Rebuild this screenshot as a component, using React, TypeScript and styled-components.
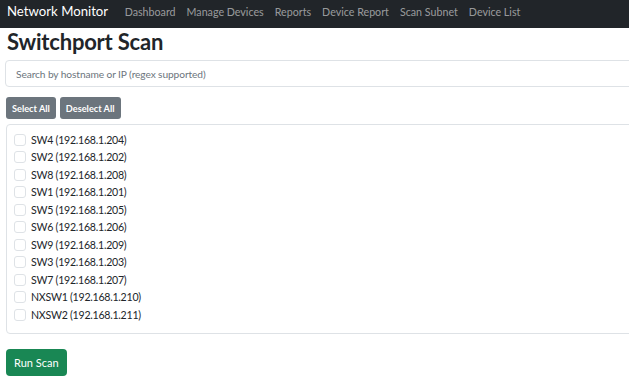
import styled, { createGlobalStyle } from 'styled-components';
import { useState } from 'react';

type Device = {
  name: string;
  ip: string;
};

const devices: Device[] = [
  { name: 'SW4', ip: '192.168.1.204' },
  { name: 'SW2', ip: '192.168.1.202' },
  { name: 'SW8', ip: '192.168.1.208' },
  { name: 'SW1', ip: '192.168.1.201' },
  { name: 'SW5', ip: '192.168.1.205' },
  { name: 'SW6', ip: '192.168.1.206' },
  { name: 'SW9', ip: '192.168.1.209' },
  { name: 'SW3', ip: '192.168.1.203' },
  { name: 'SW7', ip: '192.168.1.207' },
  { name: 'NXSW1', ip: '192.168.1.210' },
  { name: 'NXSW2', ip: '192.168.1.211' },
];

const navLinks = ['Dashboard', 'Manage Devices', 'Reports', 'Device Report', 'Scan Subnet', 'Device List'];

const GlobalStyle = createGlobalStyle`
  body {
    margin: 0;
    overflow: hidden;
    background: #fff;
    color: #212529;
    font-family: Lato, "Open Sans", sans-serif;
  }
  * {
    box-sizing: border-box;
  }
`;

const App = () => {
  const [query, setQuery] = useState('');
  const [checked, setChecked] = useState<string[]>([]);

  const toggle = (name: string) => {
    setChecked((prev) => (prev.includes(name) ? prev.filter((n) => n !== name) : [...prev, name]));
  };

  const visible = devices.filter((d) => {
    try {
      const re = new RegExp(query, 'i');
      return re.test(d.name) || re.test(d.ip);
    } catch {
      return true;
    }
  });

  return (
    <>
      <GlobalStyle />
      <NavBar>
        <Brand>Network Monitor</Brand>
        <NavList>
          {navLinks.map((link) => (
            <NavLink key={link}>{link}</NavLink>
          ))}
        </NavList>
      </NavBar>

      <Main>
        <Title>Switchport Scan</Title>
        <SearchInput
          placeholder="Search by hostname or IP (regex supported)"
          value={query}
          onChange={(e) => setQuery(e.target.value)}
        />
        <ButtonRow>
          <SmallButton onClick={() => setChecked(devices.map((d) => d.name))}>Select All</SmallButton>
          <SmallButton onClick={() => setChecked([])}>Deselect All</SmallButton>
        </ButtonRow>
        <DeviceBox>
          {visible.map((d) => (
            <DeviceRow key={d.name}>
              <CheckBox type="checkbox" checked={checked.includes(d.name)} onChange={() => toggle(d.name)} />
              <DeviceLabel>
                {d.name} ({d.ip})
              </DeviceLabel>
            </DeviceRow>
          ))}
        </DeviceBox>
        <RunButton>Run Scan</RunButton>
      </Main>
    </>
  );
};

export default App;

const NavBar = styled.nav`
  display: flex;
  align-items: center;
  height: 28px;
  padding: 0 7px 6px;
  background: #212529;
`;

const Brand = styled.div`
  margin-right: 11px;
  color: #fff;
  font-size: 13.2px;
  white-space: nowrap;
`;

const NavList = styled.div`
  display: flex;
`;

const NavLink = styled.a`
  padding: 0 5.5px;
  color: rgba(255, 255, 255, 0.55);
  font-size: 10.7px;
  white-space: nowrap;
  cursor: pointer;
`;

const Main = styled.main`
  display: flex;
  flex-direction: column;
  align-items: flex-start;
  width: 700px;
  padding: 0 0 0 6px;
`;

const Title = styled.h2`
  margin: 0 0 4px 1px;
  font-weight: 700;
  font-size: 22px;
  line-height: 28px;
  letter-spacing: -0.2px;
`;

const SearchInput = styled.input`
  align-self: stretch;
  height: 27px;
  margin-left: -1px;
  padding: 0 10px;
  border: 1px solid #dee2e6;
  border-radius: 4px;
  font-family: inherit;
  font-size: 10.2px;
  letter-spacing: -0.1px;
  color: #212529;

  &::placeholder {
    color: #6c757d;
  }
`;

const ButtonRow = styled.div`
  display: flex;
  gap: 4px;
  margin-top: 10px;
`;

const SmallButton = styled.button`
  height: 22px;
  padding: 0 6px;
  border: none;
  border-radius: 3px;
  background: #6c757d;
  color: #fff;
  font-family: inherit;
  font-weight: 700;
  font-size: 9.2px;
  cursor: pointer;
`;

const DeviceBox = styled.div`
  display: flex;
  flex-direction: column;
  align-self: stretch;
  margin-top: 5px;
  padding: 6px 8px 9px 7px;
  border: 1px solid #dee2e6;
  border-radius: 4px;
`;

const DeviceRow = styled.label`
  display: flex;
  align-items: center;
  height: 17.5px;
  gap: 5px;
`;

const CheckBox = styled.input`
  appearance: none;
  width: 12px;
  height: 12px;
  margin: 0;
  border: 1px solid #dee2e6;
  border-radius: 3px;
  background: #fff;

  &:checked {
    border-color: #0d6efd;
    background: #0d6efd;
  }
`;

const DeviceLabel = styled.span`
  font-size: 10.6px;
  letter-spacing: -0.25px;
  color: #212529;
`;

const RunButton = styled.button`
  height: 27px;
  margin-top: 15px;
  padding: 0 8px;
  border: none;
  border-radius: 4px;
  background: #198754;
  color: #fff;
  font-family: inherit;
  font-size: 11px;
  cursor: pointer;
`;
